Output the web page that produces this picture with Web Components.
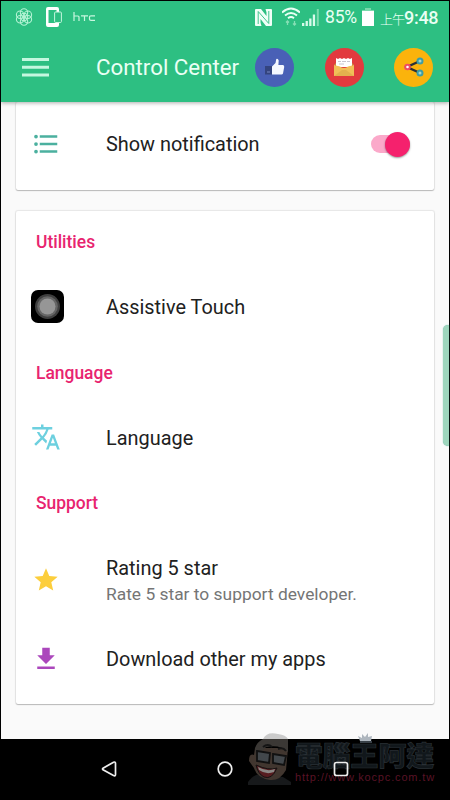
<!DOCTYPE html>
<html lang="en"><head><meta charset="utf-8"><title>Control Center</title>
<style>
html,body{margin:0;height:100%;background:#000}
body{width:450px;height:800px;overflow:hidden;font-family:Roboto,"Noto Sans CJK TC",sans-serif}
</style></head><body>
<phone-screen></phone-screen>
<script>
const define=(name,html)=>{
  const t=document.createElement('template');t.innerHTML=html;
  customElements.define(name,class extends HTMLElement{
    constructor(){super();this.attachShadow({mode:'open'}).append(t.content.cloneNode(true));}
  });
};

define('status-bar',`<style>
:host{display:flex;height:32px;align-items:center;color:#e9fff4;padding:0 10px 0 14px;box-sizing:border-box}
svg{display:block;flex:none}.sp{flex:1}
.pct{font-size:17.5px;width:33px;margin-left:5px;white-space:nowrap;letter-spacing:-.2px}
.ap{font:300 13px "Noto Sans CJK TC",sans-serif;line-height:20px;margin:3px 0 0 6px;width:24px;letter-spacing:-1px;white-space:nowrap}
.tm{font-size:18px;font-weight:500;width:35px;letter-spacing:-.3px;white-space:nowrap}
</style>
<svg width="18" height="18" viewBox="0 0 18 18" fill="none" stroke="#b5f3d5" stroke-width="1.100"><circle cx="9" cy="9" r="3.700"/><circle cx="9" cy="4.500" r="3.700"/><circle cx="12.900" cy="6.750" r="3.700"/><circle cx="12.900" cy="11.250" r="3.700"/><circle cx="9" cy="13.500" r="3.700"/><circle cx="5.100" cy="11.250" r="3.700"/><circle cx="5.100" cy="6.750" r="3.700"/></svg>
<svg style="margin-left:13px" width="17" height="20" viewBox="0 0 17 20"><path fill="#fff" fill-rule="evenodd" d="M2 0h9a2 2 0 0 1 2 2v16a2 2 0 0 1-2 2H2a2 2 0 0 1-2-2V2a2 2 0 0 1 2-2zM2.500 3v13h8V3z"/><rect x="8.600" y="5" width="6.800" height="10.500" rx="1" fill="#2dbf82" stroke="#c5f6de"/></svg>
<svg style="margin-left:10px" width="23" height="10" viewBox="0 0 23 10" role="img" aria-label="htc" fill="none" stroke="#c9f7e0" stroke-width="1.2"><path d="M1 0v9M1 4h4q1 0 1 1v4M8 3.800h7M11.500 4v5M22 3.800h-4q-1.500 0-1.500 1v2.500q0 1 1.500 1h4"/></svg>
<span class="sp"></span>
<svg width="17" height="17" viewBox="0 0 17 17"><path d="M0 1q0-1 1-1h5l5.500 7V3.500L10.500 0H16q1 0 1 1v15q0 1-1 1h-5L5.500 10v3.500L6.500 17H1q-1 0-1-1z" fill="#effff7"/><path d="M3.200 15V2.500l10.600 12V2" fill="none" stroke="#2dbf82" stroke-width=".9"/></svg>
<svg style="margin-left:10px" width="18" height="20" viewBox="0 0 18 20" fill="none" stroke="#e9fff4" stroke-width="1.900"><path d="M0 5.500q9-8 18 0M3 8.500q6-5 12 0M6 11.300q3-2.400 6 0"/><path d="M5.500 18v-4M4 15.500l1.500-1.500L7 15.500M12.500 14v4M11 16.500l1.500 1.500 1.500-1.500" stroke="#86dfb5" stroke-width="1.300"/></svg>
<svg style="margin-left:2px" width="18" height="18" viewBox="0 0 18 18" fill="#d7faea"><path d="M0 15h2.300v3H0zM3.600 13h2.300v5H3.600zM7.200 10.500h2.300V18H7.200zM10.800 6.500h2.300V18h-2.300z"/><path d="M14.800 1h2v17h-2z" fill="#7cdbae"/></svg>
<span class="pct">85%</span>
<svg style="margin-left:4px" width="12" height="18" viewBox="0 0 12 18"><path d="M3 0h6v2h3v2H0V2h3z" fill="#79d9ac"/><path d="M0 3h12v15H0z" fill="#fff"/></svg>
<span class="ap">上午</span><span class="tm">9:48</span>`);

define('round-button',`<style>
:host{display:grid;place-items:center;width:39px;height:39px;border-radius:50%;background:var(--disc);flex:none}
</style><slot></slot>`);

define('app-toolbar',`<style>
:host{display:flex;height:69px;align-items:center;box-sizing:border-box;padding:0 15px 1px 21px}
svg{display:block}
h1{margin:0 0 0 47px;font-size:22.300px;font-weight:400;color:#eafff5;width:159px;flex:none;white-space:nowrap}
nav{display:flex;gap:30.500px}
</style>
<svg width="27" height="19" fill="#c4f7df"><path d="M0 0h27v3H0zM0 7.800h27v3H0zM0 15.600h27v3H0z"/></svg>
<h1>Control Center</h1>
<nav>
<round-button style="--disc:#4960b6"><svg width="20" height="18" viewBox="0 0 20 18"><path d="M0 8h7v8.500H0z" fill="#34447f"/><path d="M2 14h3" stroke="#7787c4"/><path d="M7 8.500L10.500 5 11.300 1q1.800-.6 2.400 1.500L13.400 7H18q1.500.5 1.200 2L18 15.500q-.4 1-1.500 1H7z" fill="#f4f7ff"/></svg></round-button>
<round-button style="--disc:#e23a3e"><svg width="20" height="20" viewBox="0 0 20 20"><path d="M0 8l3-3h14l3 3z" fill="#c7923c"/><path d="M2 1l2 1 2-1 2 1 2-1 2 1 2-1 2 1 2-1v9H2z" fill="#fff"/><path d="M4 4.500h3M8 4.500h4M13 4.500h3M5 7h5" stroke="#c9c6ce"/><path d="M0 8l6 1.500q4 3 8 0L20 8v11H0z" fill="#f1bf58"/><path d="M0 19l8-6h4l8 6z" fill="#e3b04e"/></svg></round-button>
<round-button style="--disc:#fbb30c"><svg width="22" height="22" viewBox="0 0 22 22"><path d="M17 5L4 11l13 6" fill="none" stroke="#2b3037" stroke-width="2.400"/><circle cx="4.500" cy="11" r="2.300" fill="#fff" stroke="#ef4b63" stroke-width="2"/><circle cx="17" cy="5" r="2.500" fill="#a5d5d0" stroke="#3e9da4" stroke-width="2"/><circle cx="17" cy="17" r="2.500" fill="#a5d5d0" stroke="#3e9da4" stroke-width="2"/></svg></round-button>
</nav>`);

define('toggle-switch',`<style>
:host{display:flex;align-items:center;justify-content:flex-end;width:39px;height:18px;border-radius:9px;background:#fba9ca}
i{width:25px;height:25px;border-radius:50%;background:#f5216d;box-shadow:0 1px 2px #0006;flex:none}
</style><i></i>`);

define('settings-card',`<style>
:host{display:block;background:#fff;border-radius:2px;box-shadow:0 1px 1px #0003,0 0 1px 1px #00000014}
</style><slot></slot>`);

define('section-title',`<style>
:host{display:flex;align-items:center;height:65.300px;padding:0 0 2px 20px;box-sizing:border-box;font-size:17.450px;font-weight:500;color:#e8246f}
</style><slot></slot>`);

define('settings-row',`<style>
:host{display:flex;align-items:center;height:var(--h,65.300px);padding-right:24.500px;box-sizing:border-box}
.ic{width:60px;display:grid;place-items:center;flex:none}
.tx{margin-left:30px;padding-top:var(--shift,0);flex:1;font-size:19.900px;line-height:26px;color:#212121;white-space:nowrap}
::slotted([slot=sub]){display:block;font-size:17.400px;line-height:25px;color:#757575}
</style><div class="ic"><slot name="icon"></slot></div><div class="tx"><slot></slot><slot name="sub"></slot></div><slot name="end"></slot>`);

define('site-watermark',`<style>
:host{display:flex;position:absolute;left:248px;top:730px;width:190px;height:55px;align-items:flex-end;z-index:3}
.t{display:grid;width:142px;margin-left:1px;position:relative}
b{font:900 27.800px "Noto Sans CJK TC",sans-serif;line-height:32px;color:#11171b;-webkit-text-stroke:.7px #293035;white-space:nowrap}
small{font:11px "Liberation Sans",sans-serif;line-height:15px;color:#5a1326;white-space:nowrap;letter-spacing:.85px}
.crown{position:absolute;left:62px;top:-5px}
</style>
<svg width="46" height="54" viewBox="0 0 46 54"><path d="M0 51q6-9 15-8l20 3 8 5v3H0z" fill="#17191b"/><path d="M7 17h33l-2 22q-6 11-16 10Q9 47 6 37L1 30q0-8 5-6z" fill="#41362f"/><path d="M15 8q4-8 15-5 8 1 10 5z" fill="#cbcbcb"/><path d="M7 17q2-6 8-9h25v13q-8-8-22-5L8 26z" fill="#3b3835"/><path d="M15 16q5-4 9 0M30 18q5-2 8 2" fill="none" stroke="#151515" stroke-width="2"/><path d="M9 20l13 2-1 10-12-2zM25 23l13 2-2 9-11-2z" fill="#42474b" stroke="#111" stroke-width="1.800"/><path d="M8 34q13 6 21 3-5 12-13 9-6-3-8-12z" fill="#571d20" stroke="#151111"/><path d="M10 36q9 5 17 2l-1 3q-8 3-15-2z" fill="#8b8784"/></svg>
<div class="t"><svg class="crown" width="17" height="10" viewBox="0 0 17 10"><path d="M3 8L1 3l4 2 0-4 3 3 3-4v4l4-1-1 5z" fill="#aeb6be"/><path d="M3 8h12v2H3z" fill="#384047"/></svg><b>電腦王阿達</b><small>http://www.kocpc.com.tw</small></div>`);

define('nav-bar',`<style>
:host{display:flex;height:59px;align-items:center;justify-content:center;gap:100.300px;position:relative;z-index:4}
svg{display:block;flex:none}
</style>
<svg width="16" height="16" fill="none" stroke="#eee" stroke-width="1.700"><path d="M12.500 1.200Q14.500.5 14.500 2.500v11q0 2-2 1L2 8.800Q1 8 2 7.200z"/></svg>
<svg width="16" height="16" fill="none" stroke="#eee" stroke-width="1.700"><circle cx="8" cy="8" r="6.800"/></svg>
<svg width="16" height="16" fill="none" stroke="#eee" stroke-width="1.700"><rect x="1.500" y="1.500" width="13" height="13" rx="2"/></svg>`);

define('phone-screen',`<style>
:host{display:flex;flex-direction:column;width:450px;height:800px;box-sizing:border-box;padding:1px 1px 0;position:relative;background:#000}
header{background:#2dbf82;flex:none;box-shadow:0 1px 4px #0005;z-index:1}
main{height:637px;background:#fafafa;box-sizing:border-box;padding:0 15px;overflow:hidden;flex:none}
settings-card+settings-card{margin-top:21px}
.first{padding:10.500px 0 14px}
.last{padding-bottom:9px}
.edge{position:absolute;left:443px;top:325px;width:6px;height:121px;border-radius:5px 0 0 5px;background:#9ed6bd;box-shadow:0 0 1px #5a9}
svg{display:block}
</style>
<header><status-bar></status-bar><app-toolbar></app-toolbar></header>
<main>
<settings-card class="first"><settings-row style="--h:63px;--shift:2px"><svg slot="icon" width="30" height="30" viewBox="0 0 24 24" fill="#4bb09f"><path d="M4 10.500a1.500 1.500 0 1 0 0 3 1.500 1.500 0 0 0 0-3zm0-6a1.500 1.500 0 1 0 0 3 1.500 1.500 0 0 0 0-3zm0 12a1.500 1.500 0 1 0 0 3 1.500 1.500 0 0 0 0-3zM7 19h14v-2H7v2zm0-6h14v-2H7v2zm0-8v2h14V5H7z"/></svg>Show notification<toggle-switch slot="end"></toggle-switch></settings-row></settings-card>
<settings-card class="last">
<section-title>Utilities</section-title>
<settings-row><svg slot="icon" width="33" height="33" viewBox="0 0 33 33" style="margin:0 0 3px 3px"><rect width="33" height="33" rx="7"/><circle cx="16.500" cy="16.500" r="12.500" fill="#3f3f3f"/><circle cx="16.500" cy="16.500" r="10.300" fill="#666"/><circle cx="16.500" cy="16.500" r="8" fill="#969696"/></svg>Assistive Touch</settings-row>
<section-title>Language</section-title>
<settings-row><svg slot="icon" width="30" height="30" viewBox="0 0 24 24" fill="#6dd0df" style="margin-bottom:4px"><path d="M12.870 15.070l-2.540-2.510.03-.03A17.520 17.520 0 0 0 14.070 6H17V4h-7V2H8v2H1v1.990h11.170C11.500 7.920 10.440 9.750 9 11.350 8.070 10.320 7.300 9.190 6.690 8h-2c.73 1.630 1.730 3.170 2.980 4.560l-5.090 5.020L4 19l5-5 3.110 3.110.76-2.040zM18.500 10h-2L12 22h2l1.120-3h4.750L21 22h2l-4.500-12zm-2.620 7l1.620-4.330L19.120 17h-3.240z"/></svg>Language</settings-row>
<section-title>Support</section-title>
<settings-row style="--h:88px;--shift:2px"><svg slot="icon" width="28" height="28" viewBox="0 0 24 24" fill="#fcce3c" style="margin-bottom:2px"><path d="M12 17.270L18.180 21l-1.640-7.030L22 9.240l-7.190-.61L12 2 9.190 8.630 2 9.240l5.460 4.730L5.820 21z"/></svg>Rating 5 star<span slot="sub">Rate 5 star to support developer.</span></settings-row>
<settings-row style="--h:70px"><svg slot="icon" width="30" height="30" viewBox="0 0 24 24" fill="#ab47bc" style="margin-bottom:2px"><path d="M19 9h-4V3H9v6H5l7 7 7-7zM5 18v2h14v-2H5z"/></svg>Download other my apps</settings-row>
</settings-card>
</main>
<nav-bar></nav-bar>
<div class="edge"></div>
<site-watermark></site-watermark>`);
</script></body></html>
